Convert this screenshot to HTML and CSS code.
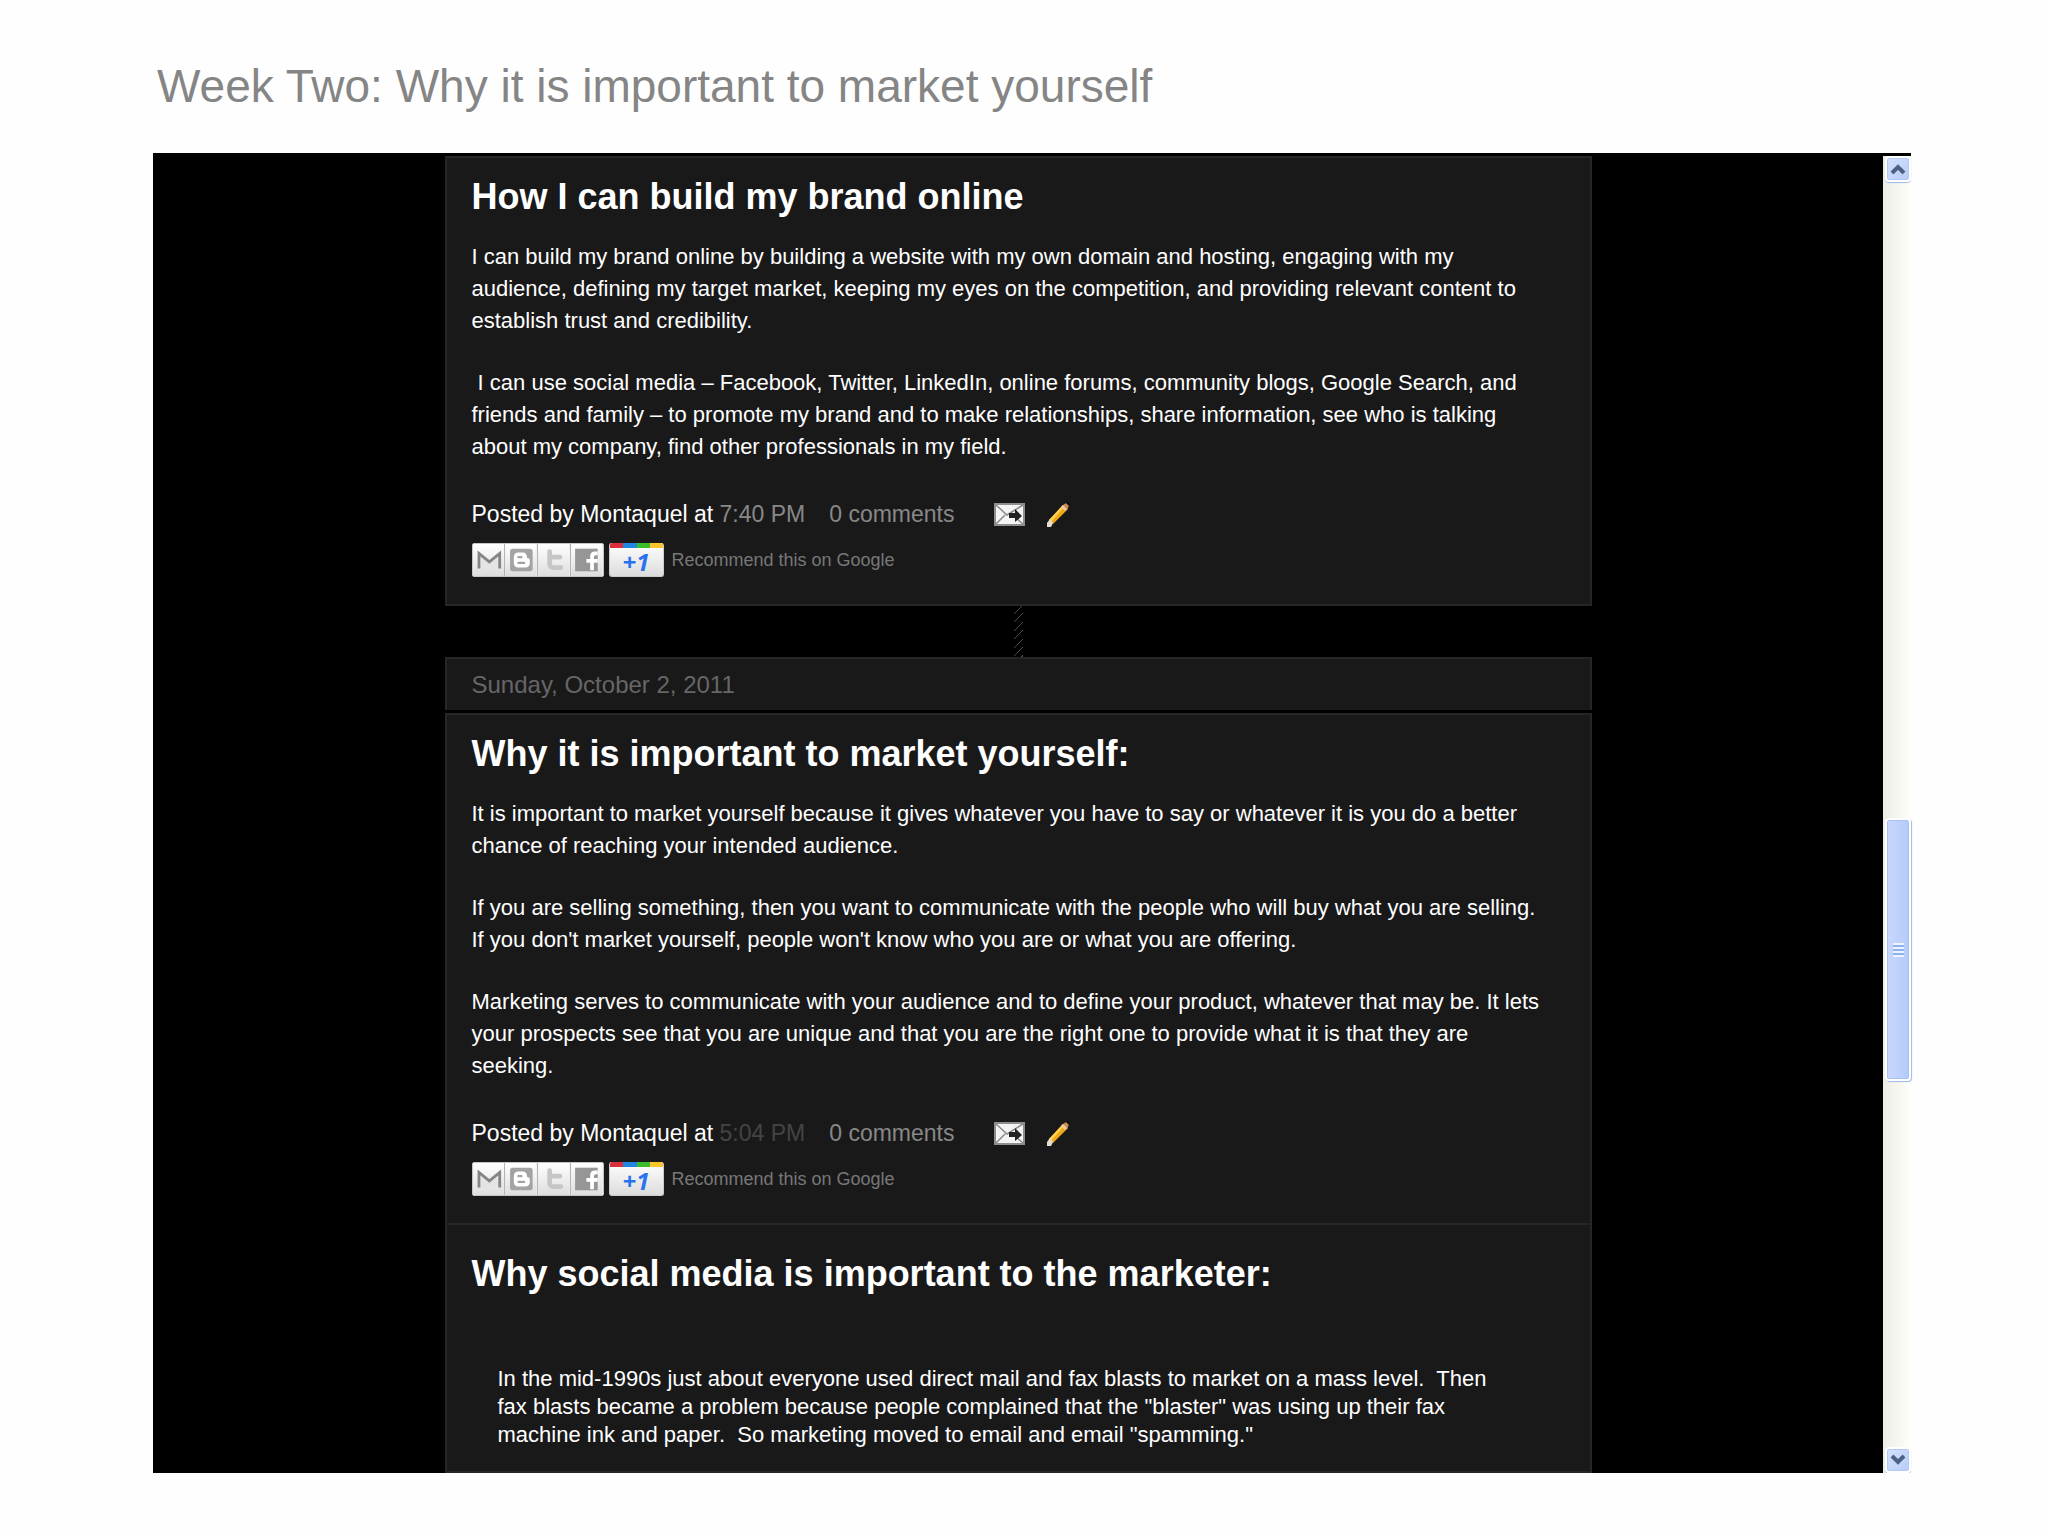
FILE: index.html
```html
<!doctype html>
<html lang="en">
<head>
    <meta charset="UTF-8">
    <meta name="viewport" content="width=device-width, initial-scale=1.0">
    <title>Week Two: Why it is important to market yourself</title>
    <link rel="stylesheet" href="styles.css">
</head>
<body>
<!-- shared icons -->
<svg class="sprite" aria-hidden="true">
    <defs>
        <linearGradient id="paper" x1="0" y1="0" x2="0" y2="1">
            <stop offset="0" stop-color="#fff"/>
            <stop offset="1" stop-color="#dedede"/>
        </linearGradient>
    </defs>
    <symbol id="mail" viewBox="0 0 31 23">
        <rect x="1" y="1" width="29" height="21" fill="#f4f4f4" stroke="#8e8e8e" stroke-width="2"/>
        <path d="M2 2l11 10L29 2M2 21l9-9M29 21l-7-6" fill="none" stroke="#8a8a8a" stroke-width="1.5"/>
        <path d="M15 10h6V6l7 7-7 6v-4h-6z" fill="#222"/>
    </symbol>
    <symbol id="pencil" viewBox="0 0 24 26">
        <path d="M17 4l4-3 3 2-2 6z" fill="#050505"/>
        <path d="M3 19L17 4l5 4L7 23z" fill="#f0a818"/>
        <path d="M3 19L17 4l2 1L5 21z" fill="#ffd34f"/>
        <path d="M17 4l3-2 3 3-2 4z" fill="#c98a52"/>
        <path d="M15 6l2-2 4 4-2 2z" fill="#e8c9a0"/>
        <path d="M1 22l3-4 3 4-2 4H1z" fill="#e6ddd0"/>
    </symbol>
    <symbol id="gmail" viewBox="0 0 33 34">
        <rect width="33" height="34" fill="url(#paper)"/>
        <path d="M8 12l9 8 9-8v14H8z" fill="#e4e4e4"/>
        <path d="M6 26V10l11 9 11-9v16" fill="none" stroke="#858585" stroke-width="3"/>
    </symbol>
    <symbol id="blogger" viewBox="0 0 33 34">
        <rect width="33" height="34" fill="url(#paper)"/>
        <rect x="5" y="5" width="24" height="24" rx="3" fill="#a3a3a3"/>
        <path d="M14 9h4q5 0 5 5v1q3 0 3 3v2q0 5-5 5h-7q-5 0-5-5v-6q0-5 5-5z" fill="#fff"/>
        <path d="M14 14h3M14 20h6" stroke="#a3a3a3" stroke-width="2.5" stroke-linecap="round"/>
    </symbol>
    <symbol id="twitter" viewBox="0 0 33 34">
        <rect width="33" height="34" fill="url(#paper)"/>
        <path d="M12 8v13q0 4 4 4h8M12 14h11" fill="none" stroke="#c6c6c6" stroke-width="5" stroke-linecap="round"/>
    </symbol>
    <symbol id="facebook" viewBox="0 0 33 34">
        <rect width="33" height="34" fill="url(#paper)"/>
        <rect x="4" y="5" width="24" height="24" fill="#969696"/>
        <path d="M20 28v-8h-4v-4h4v-3q0-5 5-5h3v4h-2q-2 0-2 2v2h4v4h-4v8z" fill="#fff"/>
    </symbol>
    <symbol id="up" viewBox="0 0 16 12">
        <path d="M2 10l6-6 6 6" fill="none" stroke="#4d6185" stroke-width="4"/>
    </symbol>
    <symbol id="down" viewBox="0 0 16 12">
        <path d="M2 2l6 6 6-6" fill="none" stroke="#4d6185" stroke-width="4"/>
    </symbol>
</svg>

<h1 class="slide-title">Week Two: Why it is important to market yourself</h1>

<div class="screen">
    <main class="page">
        <div class="column">
            <article class="post">
                <h2 class="post-title">How I can build my brand online</h2>
                <div class="post-body">
                    <p>I can build my brand online by building a website with my own domain and hosting, engaging with my<br>
                        audience, defining my target market, keeping my eyes on the competition, and providing relevant content to<br>
                        establish trust and credibility.</p>
                    <p>&nbsp;I can use social media – Facebook, Twitter, LinkedIn, online forums, community blogs, Google Search, and<br>
                        friends and family – to promote my brand and to make relationships, share information, see who is talking<br>
                        about my company, find other professionals in my field.</p>
                </div>
                <div class="post-footer">
                    <span class="author">Posted by Montaquel at <a class="time" href="#">7:40 PM</a></span>
                    <a class="comments" href="#">0 comments</a>
                    <a class="mail" href="#" aria-label="Email post"><svg width="31" height="23"><use href="#mail"/></svg></a>
                    <a class="edit" href="#" aria-label="Edit post"><svg width="24" height="26"><use href="#pencil"/></svg></a>
                </div>
                <div class="share">
                    <div class="share-buttons">
                        <button aria-label="Email this"><svg><use href="#gmail"/></svg></button>
                        <button aria-label="Blog this"><svg><use href="#blogger"/></svg></button>
                        <button aria-label="Share to Twitter"><svg><use href="#twitter"/></svg></button>
                        <button aria-label="Share to Facebook"><svg><use href="#facebook"/></svg></button>
                    </div>
                    <button class="plus-one">+1</button>
                    <span class="recommend">Recommend this on Google</span>
                </div>
            </article>

            <div class="connector"></div>

            <h3 class="date-header">Sunday, October 2, 2011</h3>
            <article class="post">
                <h2 class="post-title">Why it is important to market yourself:</h2>
                <div class="post-body">
                    <p>It is important to market yourself because it gives whatever you have to say or whatever it is you do a better<br>
                        chance of reaching your intended audience.</p>
                    <p>If you are selling something, then you want to communicate with the people who will buy what you are selling.<br>
                        If you don't market yourself, people won't know who you are or what you are offering.</p>
                    <p>Marketing serves to communicate with your audience and to define your product, whatever that may be. It lets<br>
                        your prospects see that you are unique and that you are the right one to provide what it is that they are<br>
                        seeking.</p>
                </div>
                <div class="post-footer">
                    <span class="author">Posted by Montaquel at <a class="time visited" href="#">5:04 PM</a></span>
                    <a class="comments" href="#">0 comments</a>
                    <a class="mail" href="#" aria-label="Email post"><svg width="31" height="23"><use href="#mail"/></svg></a>
                    <a class="edit" href="#" aria-label="Edit post"><svg width="24" height="26"><use href="#pencil"/></svg></a>
                </div>
                <div class="share">
                    <div class="share-buttons">
                        <button aria-label="Email this"><svg><use href="#gmail"/></svg></button>
                        <button aria-label="Blog this"><svg><use href="#blogger"/></svg></button>
                        <button aria-label="Share to Twitter"><svg><use href="#twitter"/></svg></button>
                        <button aria-label="Share to Facebook"><svg><use href="#facebook"/></svg></button>
                    </div>
                    <button class="plus-one">+1</button>
                    <span class="recommend">Recommend this on Google</span>
                </div>
            </article>
            <article class="post post-next">
                <h2 class="post-title">Why social media is important to the marketer:</h2>
                <blockquote class="quote">In the mid-1990s just about everyone used direct mail and fax blasts to market on a mass level.&nbsp; Then<br>
                    fax blasts became a problem because people complained that the "blaster" was using up their fax<br>
                    machine ink and paper.&nbsp; So marketing moved to email and email "spamming."</blockquote>
            </article>
        </div>
    </main>

    <div class="scrollbar">
        <button class="arrow" aria-label="Scroll up"><svg width="16" height="12"><use href="#up"/></svg></button>
        <div class="track">
            <div class="thumb"><span class="grip"></span></div>
        </div>
        <button class="arrow" aria-label="Scroll down"><svg width="16" height="12"><use href="#down"/></svg></button>
    </div>
</div>
</body>
</html>
```
FILE: styles.css
```css
* {
    margin: 0;
    padding: 0;
    box-sizing: border-box;
}
body {
    background: #fefefe;
    font-family: "Liberation Sans", Arial, sans-serif;
}
a {
    color: #888;
    text-decoration: none;
}
button {
    border: 0;
    cursor: pointer;
}
.sprite {
    position: absolute;
    width: 0;
    height: 0;
}
.slide-title {
    padding: 60px 157px 41px;
    font-size: 46px;
    line-height: 52px;
    font-weight: normal;
    color: #858585;
}
.screen {
    display: flex;
    margin: 0 137px 0 153px;
    background: #000;
    border-top: 3px solid #000;
}
.page {
    flex: 1;
    padding: 0 24px;
}
.column {
    max-width: 1147px;
    margin: 0 auto;
}
.post {
    padding: 15px 25px 27px;
    background: #1a191a;
    border: 2px solid #262628;
    color: #fff;
}
.post-title {
    font-size: 36px;
    line-height: 48px;
}
.post-body {
    padding: 20px 0 3px;
    font-size: 22px;
    line-height: 32px;
    white-space: nowrap;
}
.post-body p {
    margin-bottom: 30px;
}
.post-footer {
    display: flex;
    align-items: center;
    height: 36px;
    font-size: 23px;
    white-space: nowrap;
}
.post-footer svg {
    display: block;
}
.time.visited {
    color: #444;
}
.comments {
    margin-left: 24px;
}
.mail {
    margin-left: 40px;
}
.edit {
    margin-left: 21px;
}
.share {
    display: flex;
    align-items: center;
    height: 34px;
    margin-top: 11px;
}
.share-buttons {
    display: flex;
    gap: 1px;
    width: 132px;
    height: 34px;
    border: 1px solid #c4c4c4;
    border-radius: 2px;
    background: #b4b4b4;
    overflow: hidden;
}
.share-buttons button {
    flex: 1;
    background: #eee;
}
.share-buttons svg {
    display: block;
    width: 100%;
    height: 100%;
}
.plus-one {
    width: 55px;
    height: 34px;
    margin: 0 8px 0 5px;
    padding-top: 4px;
    border: 1px solid #ccc;
    border-top: 0;
    border-radius: 3px;
    background:
        linear-gradient(90deg, #dc2d3c 25%, #1f87e0 25%, #1f87e0 50%, #3cbb2c 50%, #3cbb2c 75%, #fbc62c 75%) top / 100% 5px no-repeat,
        linear-gradient(#fff, #dcdcdc);
    color: #2a72ee;
    font: italic bold 24px/28px "Open Sans", sans-serif;
}
.recommend {
    font-size: 18px;
    color: #777;
}
.connector {
    width: 9px;
    height: 51px;
    margin: 0 auto;
    background: repeating-linear-gradient(135deg, #000 0, #000 5px, #4a4a4a 5px, #4a4a4a 6px);
}
.date-header {
    padding: 11px 25px 10px;
    background: #1a191a;
    border: 2px solid #262628;
    border-bottom: 0;
    margin-bottom: 3px;
    font-size: 24px;
    line-height: 30px;
    font-weight: normal;
    color: #666;
}
.post-next {
    border-top: 0;
    padding-top: 25px;
    padding-bottom: 22px;
}
.quote {
    padding: 67px 0 0 26px;
    font-size: 22px;
    line-height: 28px;
    white-space: nowrap;
}

/* XP scrollbar */
.scrollbar {
    display: flex;
    flex-direction: column;
    width: 28px;
    background: linear-gradient(90deg, #eeede5, #fefefb);
}
.arrow {
    display: flex;
    align-items: center;
    justify-content: center;
    width: 26px;
    height: 26px;
    margin-left: 2px;
    border: 2px solid #fff;
    border-radius: 4px;
    box-shadow: inset 0 0 0 1px #b4c8f4, 0 1px 1px #9db8e8;
    background: linear-gradient(135deg, #d5e1fd, #b6ccf8);
}
.track {
    flex: 1;
    display: flex;
    flex-direction: column;
}
.track::before {
    content: "";
    flex: 638;
}
.track::after {
    content: "";
    flex: 367;
}
.thumb {
    flex: 259;
    display: flex;
    align-items: center;
    justify-content: center;
    width: 26px;
    margin-left: 2px;
    border: 2px solid #fff;
    border-radius: 4px;
    box-shadow: inset 0 0 0 1px #a9c0f2, 1px 1px 1px #9db8e8;
    background: linear-gradient(90deg, #c9d7fd, #bdd0fb 60%, #b0cbfa);
}
.grip {
    width: 11px;
    height: 14px;
    background: repeating-linear-gradient(#eef4ff 0, #eef4ff 2px, #8cb0f0 2px, #8cb0f0 4px);
}
```
